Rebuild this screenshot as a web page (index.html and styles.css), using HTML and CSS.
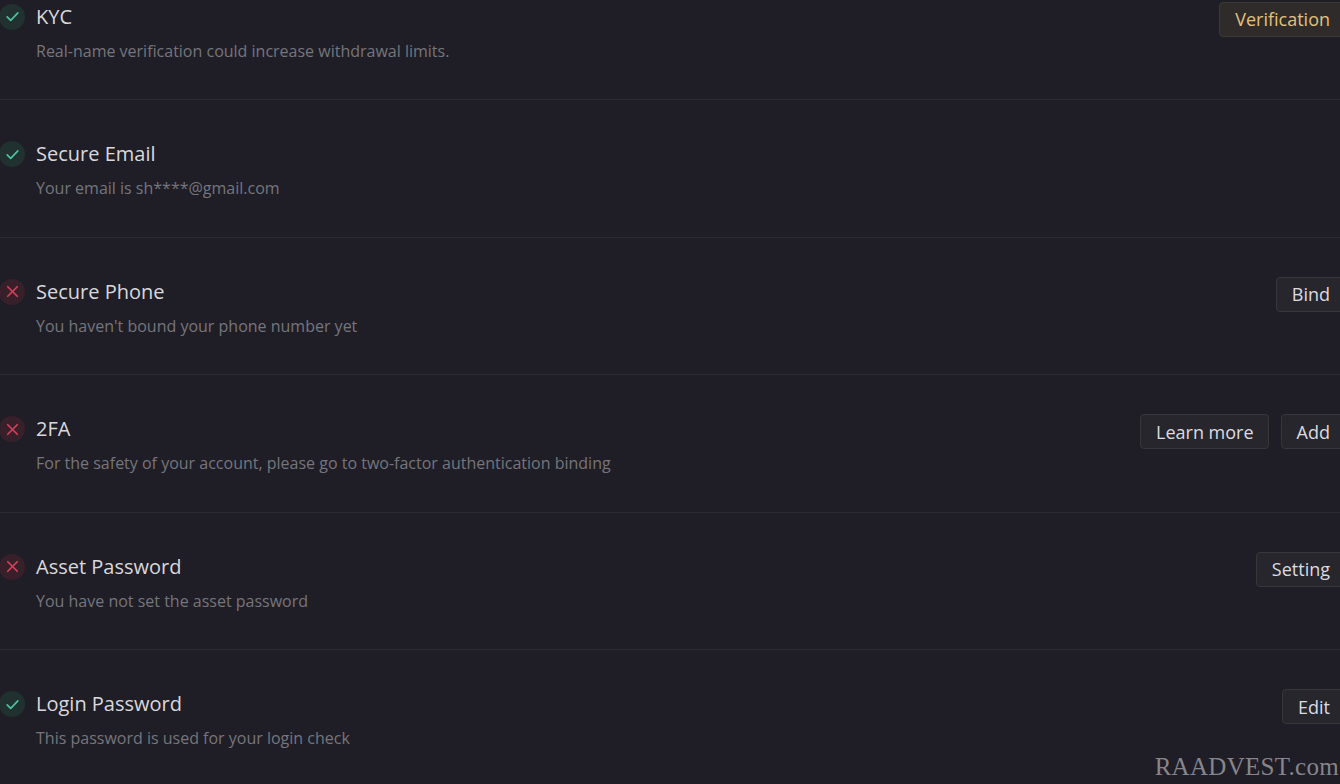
FILE: index.html
```html
<!DOCTYPE html>
<html lang="en">
<head>
    <meta charset="UTF-8">
    <meta name="viewport" content="width=device-width, initial-scale=1.0">
    <title>Security</title>
    <link rel="stylesheet" href="styles.css">
</head>
<body>
    <div class="security-list">
        <div class="sec-row">
            <span class="status ok"><svg viewBox="0 0 16 16"><path d="M3.5 8.3l3 3 6-6.3"/></svg></span>
            <div class="sec-text">
                <div class="sec-title">KYC</div>
                <div class="sec-desc">Real-name verification could increase withdrawal limits.</div>
            </div>
            <div class="sec-actions">
                <button class="btn btn-gold">Verification</button>
            </div>
        </div>

        <div class="sec-row">
            <span class="status ok"><svg viewBox="0 0 16 16"><path d="M3.5 8.3l3 3 6-6.3"/></svg></span>
            <div class="sec-text">
                <div class="sec-title">Secure Email</div>
                <div class="sec-desc">Your email is sh****@gmail.com</div>
            </div>
        </div>

        <div class="sec-row">
            <span class="status bad"><svg viewBox="0 0 16 16"><path d="M4 4l8 8M12 4l-8 8"/></svg></span>
            <div class="sec-text">
                <div class="sec-title">Secure Phone</div>
                <div class="sec-desc">You haven't bound your phone number yet</div>
            </div>
            <div class="sec-actions">
                <button class="btn">Bind</button>
            </div>
        </div>

        <div class="sec-row">
            <span class="status bad"><svg viewBox="0 0 16 16"><path d="M4 4l8 8M12 4l-8 8"/></svg></span>
            <div class="sec-text">
                <div class="sec-title">2FA</div>
                <div class="sec-desc">For the safety of your account, please go to two-factor authentication binding</div>
            </div>
            <div class="sec-actions">
                <button class="btn">Learn more</button>
                <button class="btn">Add</button>
            </div>
        </div>

        <div class="sec-row">
            <span class="status bad"><svg viewBox="0 0 16 16"><path d="M4 4l8 8M12 4l-8 8"/></svg></span>
            <div class="sec-text">
                <div class="sec-title">Asset Password</div>
                <div class="sec-desc">You have not set the asset password</div>
            </div>
            <div class="sec-actions">
                <button class="btn">Setting</button>
            </div>
        </div>

        <div class="sec-row">
            <span class="status ok"><svg viewBox="0 0 16 16"><path d="M3.5 8.3l3 3 6-6.3"/></svg></span>
            <div class="sec-text">
                <div class="sec-title">Login Password</div>
                <div class="sec-desc">This password is used for your login check</div>
            </div>
            <div class="sec-actions">
                <button class="btn">Edit</button>
            </div>
        </div>
    </div>

    <div class="watermark">RAADVEST.com</div>
</body>
</html>
```

FILE: styles.css
```css
/* page */
html, body {
    margin: 0;
    height: 100%;
    overflow: hidden;
}
body {
    background-color: #1f1e26;
    font-family: "Open Sans", "Noto Sans", sans-serif;
    position: relative;
}

/* list of security items */
.security-list {
    width: 1346px;
    margin: -37.5px 0 0 -1px;
}
.sec-row {
    display: flex;
    align-items: flex-start;
    padding: 40px 0 36.5px;
    border-bottom: 1px solid #2b2a32;
}
.status {
    width: 26px;
    height: 26px;
    border-radius: 50%;
    margin-top: 1px;
    display: flex;
    align-items: center;
    justify-content: center;
    flex-shrink: 0;
}
.status svg {
    width: 19px;
    height: 19px;
    fill: none;
    stroke-width: 1.4;
    stroke-linecap: round;
    stroke-linejoin: round;
}
.status.ok {
    background-color: #213130;
}
.status.ok svg {
    stroke: #4cc39c;
}
.status.bad {
    background-color: #38202a;
}
.status.bad svg {
    stroke: #d8405a;
}
.sec-text {
    flex: 1;
    margin-left: 11px;
}
.sec-title {
    font-size: 20px;
    font-weight: 500;
    line-height: 28px;
    color: #d9d8dd;
}
.sec-desc {
    margin-top: 8px;
    font-size: 16px;
    line-height: 24px;
    color: #76757c;
}

/* buttons */
.sec-actions {
    display: flex;
    gap: 12px;
    margin-top: -1px;
}
.btn {
    height: 35px;
    padding: 0 14px 0 15px;
    background-color: #27262d;
    border: 1px solid #37363d;
    border-radius: 4px;
    color: #dcdbe0;
    font-family: "Open Sans", "Noto Sans", sans-serif;
    font-size: 18px;
}
.btn-gold {
    color: #e2c17c;
    background-color: #2e2b2a;
    border-color: #3c3935;
}

/* watermark */
.watermark {
    position: absolute;
    right: 1px;
    bottom: 3px;
    font-family: "Liberation Serif", serif;
    font-size: 25px;
    color: #86858c;
    letter-spacing: 0.3px;
}
```
